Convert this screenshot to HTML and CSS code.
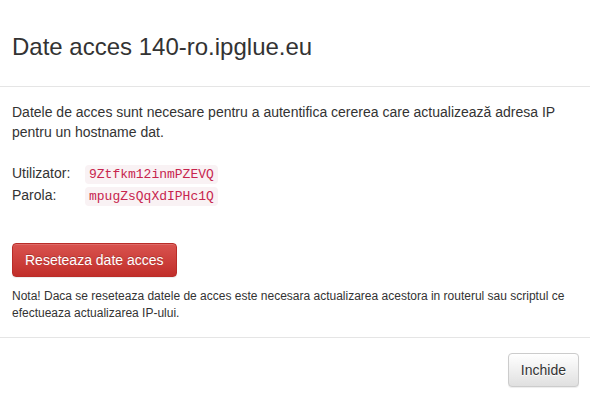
FILE: index.html
```html
<!DOCTYPE html>
<html lang="ro">
  <head>
    <meta charset="UTF-8" />
    <meta name="viewport" content="width=device-width, initial-scale=1.0" />
    <title>Date acces 140-ro.ipglue.eu</title>
    <link rel="stylesheet" href="styles.css">
  </head>
  <body>
    <div class="modal-content">
      <!-- antet -->
      <div class="modal-header">
        <h3 class="modal-title">Date acces 140-ro.ipglue.eu</h3>
      </div>

      <!-- continut -->
      <div class="modal-body">
        <p class="intro">
          Datele de acces sunt necesare pentru a autentifica cererea care actualizează adresa IP
          pentru un hostname dat.
        </p>

        <div class="credentials">
          <span class="label">Utilizator:</span>
          <span><code>9Ztfkm12inmPZEVQ</code></span>
          <span class="label">Parola:</span>
          <span><code>mpugZsQqXdIPHc1Q</code></span>
        </div>

        <button class="btn btn-danger">Reseteaza date acces</button>

        <p class="note">
          Nota! Daca se reseteaza datele de acces este necesara actualizarea acestora in routerul sau scriptul ce
          efectueaza actualizarea IP-ului.
        </p>
      </div>

      <!-- subsol -->
      <div class="modal-footer">
        <button class="btn btn-default">Inchide</button>
      </div>
    </div>
  </body>
</html>
```

FILE: styles.css
```css
:root {
  --text: #333333;
  --line: #e5e5e5;
  --code-fg: #c7254e;
  --code-bg: #f9f2f4;
}

body {
  margin: 0;
  padding: 0;
  background: #fff;
  color: var(--text);
  font-family: "Liberation Sans", Arial, sans-serif;
  font-size: 14px;
  line-height: 20px;
}

/* --- fereastra --- */
.modal-content {
  width: 590px;
  background: #fff;
}

.modal-header {
  padding: 34px 11px 26px 12px;
  border-bottom: 1px solid var(--line);
}

.modal-title {
  margin: 0;
  font-size: 24px;
  font-weight: 500;
  line-height: 26px;
}

.modal-body {
  padding: 15px 11px 15px 12px;
}

.intro {
  margin: 0 0 21px;
}

/* utilizator / parola */
.credentials {
  display: grid;
  grid-template-columns: 73px auto;
  justify-items: start;
  margin-bottom: 36px;
}

code {
  padding: 2px 4px;
  font-family: "Liberation Mono", "Courier New", monospace;
  font-size: 13px;
  color: var(--code-fg);
  background: var(--code-bg);
  border-radius: 4px;
}

.note {
  margin: 11px 0 0;
  font-size: 12px;
  line-height: 17px;
}

/* --- butoane --- */
.btn {
  display: inline-block;
  padding: 6px 12px;
  font-family: inherit;
  font-size: 14px;
  line-height: 20px;
  border: 1px solid transparent;
  border-radius: 4px;
  cursor: pointer;
  box-shadow: inset 0 1px 0 rgba(255, 255, 255, 0.15), 0 1px 1px rgba(0, 0, 0, 0.075);
}

.btn-danger {
  color: #fff;
  background-image: linear-gradient(to bottom, #d9534f 0, #c12e2a 100%);
  border-color: #b92c28;
  text-shadow: 0 -1px 0 rgba(0, 0, 0, 0.2);
}

.btn-default {
  color: var(--text);
  background-image: linear-gradient(to bottom, #fff 0, #e0e0e0 100%);
  border-color: #ccc;
  text-shadow: 0 1px 0 #fff;
}

.modal-footer {
  padding: 15px 11px 15px 12px;
  border-top: 1px solid var(--line);
  text-align: right;
}
```
